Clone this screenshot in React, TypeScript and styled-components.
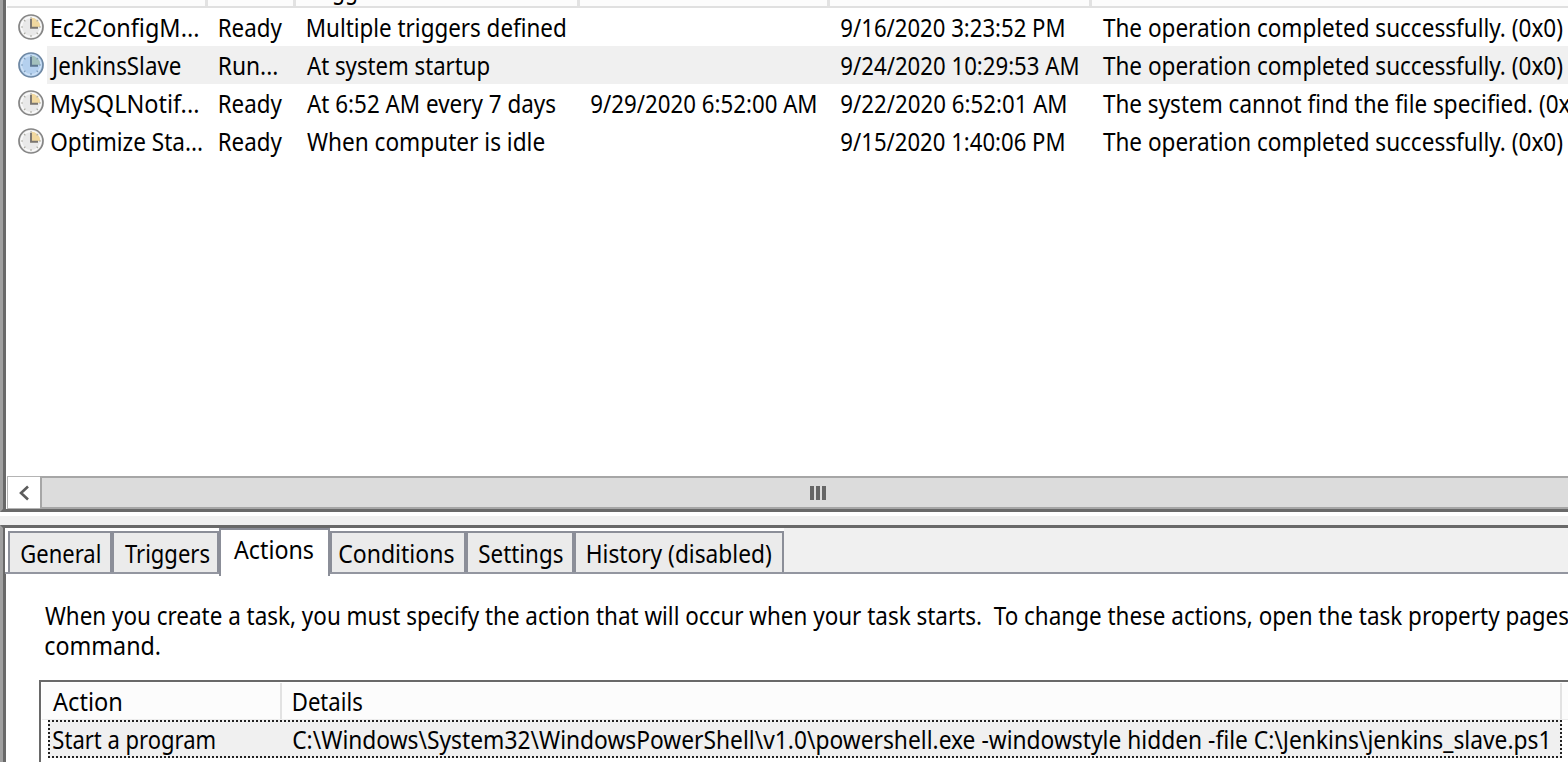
import React, { useLayoutEffect, useState } from "react";
import styled, { createGlobalStyle } from "styled-components";

const FONT = '"Noto Sans", "Open Sans", sans-serif';
const SIZE = 24.5;

const Global = createGlobalStyle`
  html, body { margin: 0; height: 762px; overflow: hidden; background: #fff; }
  * { box-sizing: border-box; }
`;

const Glyphs = styled.span`
  display: inline-block;
  white-space: pre;
  transform-origin: 0 50%;
`;

/* Text condensed horizontally so that its drawn extent is `ink` pixels wide.
   Measured at ten times the size, since glyph bounds are rounded to whole pixels. */
function Fit({ ink, children }: { ink: number; children: string }) {
  const [transform, setTransform] = useState("none");
  useLayoutEffect(() => {
    const ctx = document.createElement("canvas").getContext("2d");
    if (!ctx) return;
    ctx.font = `${SIZE * 10}px ${FONT}`;
    const m = ctx.measureText(children);
    const left = m.actualBoundingBoxLeft / 10;
    const right = m.actualBoundingBoxRight / 10;
    const scale = ink / (left + right);
    setTransform(`translate(${left * scale * 0.6}px, 1px) scaleX(${scale})`);
  }, [ink, children]);
  return <Glyphs style={{ transform }}>{children}</Glyphs>;
}

const Window = styled.div`
  width: 1568px;
  height: 762px;
  overflow: hidden;
  display: flex;
  flex-direction: column;
  background: #f0f0f0;
  color: #000;
  font: ${SIZE}px/38px ${FONT};
`;

const TaskPane = styled.section`
  height: 512px;
  flex: none;
  display: flex;
  flex-direction: column;
  background: #fff;
  border-bottom: 3px solid #696969;
  border-left: 3px solid #a0a0a0;
  box-shadow: inset 3px 0 #696969;
  padding-left: 4px;
`;

const HeaderRow = styled.div`
  display: grid;
  grid-template-columns: 201px 88px 284px 250px 262px 480px;
  height: 8px;
  flex: none;
  overflow: hidden;
  background: #fcfcfc;
  border-bottom: 2px solid #e0e0e0;
`;

const HeaderCell = styled.div`
  height: 6px;
  border-right: 3px solid #e2e2e2;
  padding-left: 11px;
  display: flex;
  align-items: flex-end;
  line-height: 34px;
  white-space: nowrap;
`;

const TaskRow = styled.div<{ $selected?: boolean }>`
  display: grid;
  grid-template-columns: 199px 88px 284px 250px 262px 478px;
  height: 38px;
  flex: none;
  background: ${(p) => (p.$selected ? "linear-gradient(90deg, #fff 40px, #f0f0f0 40px)" : "#fff")};
`;

const Cell = styled.div`
  display: flex;
  align-items: center;
  padding-left: 13px;
  white-space: nowrap;
  min-width: 0;
`;

const NameCell = styled(Cell)`
  padding-left: 11px;
  gap: 7px;
`;

const ClockSvg = styled.svg`
  flex: none;
`;

const ListSpace = styled.div`
  flex: 1;
`;

const ScrollBar = styled.div`
  display: flex;
  height: 33px;
  flex: none;
`;

const ScrollButton = styled.div`
  width: 33px;
  border: 1px solid #b4b4b4;
  border-right: 0;
  display: flex;
  align-items: center;
  justify-content: center;
`;

const ScrollThumb = styled.div`
  flex: 1;
  background: #dcdcdc;
  border: 2px solid #a6a6a6;
  border-right: 0;
  display: flex;
  align-items: center;
  padding-left: 768px;
  gap: 2px;
`;

const GripBar = styled.i`
  width: 4px;
  height: 14px;
  background: #666;
`;

const Splitter = styled.div`
  height: 13px;
  flex: none;
  border-top: 4px solid #fff;
  background: #f0f0f0;
`;

const DetailPane = styled.section`
  flex: 1;
  min-height: 0;
  display: flex;
  flex-direction: column;
  background: #fff;
  border-top: 3px solid #696969;
  border-left: 3px solid #a0a0a0;
  box-shadow: inset 3px 0 #696969;
`;

const TabStrip = styled.div`
  height: 46px;
  flex: none;
  display: flex;
  align-items: flex-end;
  padding-left: 3px;
  margin-left: 2px;
  background: linear-gradient(90deg, #fff 779px, #f0f0f0 779px);
  border-bottom: 2px solid #9396a0;
`;

const Tab = styled.div<{ $w: number; $pad: number; $active?: boolean }>`
  width: ${(p) => p.$w}px;
  height: ${(p) => (p.$active ? 48 : 41)}px;
  flex: none;
  margin-bottom: ${(p) => (p.$active ? -4 : 0)}px;
  padding-left: ${(p) => p.$pad}px;
  position: relative;
  background: ${(p) => (p.$active ? "#fff" : "#ebebeb")};
  border: 2px solid #8b8e98;
  border-bottom: 0;
  line-height: ${(p) => (p.$active ? 38 : 39)}px;
`;

const Page = styled.div`
  padding: 26px 0 0 42px;
`;

const Explanation = styled.p`
  margin: 0;
  height: 80px;
  line-height: 30px;
  white-space: nowrap;
`;

const ActionTable = styled.div`
  margin-left: -6px;
  height: 90px;
  border: solid #696969;
  border-width: 2px 0 0 2px;
  padding: 1px 0 0 1px;
`;

const ActionHeader = styled.div`
  display: flex;
  height: 37px;
  background: #fcfcfc;
  border-bottom: 1px solid #ececec;
  line-height: 36px;
`;

const ActionHeaderCell = styled.div<{ $w: number; $pad: number }>`
  width: ${(p) => p.$w}px;
  padding-left: ${(p) => p.$pad}px;
  border-right: 2px solid #e2e2e2;
  flex: none;
`;

const ActionRow = styled.div`
  display: flex;
  margin-left: 6px;
  width: 1514px;
  height: 38px;
  background: #f0f0f0;
  border: 2px dotted #222;
  line-height: 34px;
`;

const ActionCell = styled.div<{ $w: number; $pad: number }>`
  width: ${(p) => p.$w}px;
  padding-left: ${(p) => p.$pad}px;
  flex: none;
`;

function Clock({ running }: { running?: boolean }) {
  return (
    <ClockSvg width="26" height="26" viewBox="0 0 26 26" fill="none">
      <circle cx="13" cy="13" r="12" fill={running ? "#b4d0ee" : "#e9e9e9"} stroke={running ? "#6d87a3" : "#858585"} strokeWidth="1.7" />
      <circle cx="13" cy="13" r="9.8" stroke={running ? "#cfe2f6" : "#fafafa"} strokeWidth="1.5" />
      <path d="M13 13V3.6A9.4 9.4 0 0 1 22.4 13Z" fill={running ? "#a3c0bd" : "#f1d89f"} />
      <path d="M13 3v2M13 21v2M3 13h2M21 13h2M6 6l1.4 1.4M18.6 18.6 20 20M6 20l1.4-1.4M18.6 7.4 20 6" stroke={running ? "#7f9dbb" : "#b0b0a8"} strokeWidth="1.2" />
      <path d="M13 5v8.7h7" stroke={running ? "#5d7790" : "#7a756f"} strokeWidth="1.9" />
    </ClockSvg>
  );
}

type Text = [string, number] | null;
const OK: Text = ["The operation completed successfully. (0x0)", 459];
const TASKS: { selected?: boolean; name: [string, number]; cells: Text[] }[] = [
  { name: ["Ec2ConfigM...", 146], cells: [["Ready", 62], ["Multiple triggers defined", 257], null, ["9/16/2020 3:23:52 PM", 222], OK] },
  { selected: true, name: ["JenkinsSlave", 130], cells: [["Run...", 57], ["At system startup", 182], null, ["9/24/2020 10:29:53 AM", 236], OK] },
  { name: ["MySQLNotif...", 146], cells: [["Ready", 62], ["At 6:52 AM every 7 days", 248], ["9/29/2020 6:52:00 AM", 224], ["9/22/2020 6:52:01 AM", 224], ["The system cannot find the file specified. (0x", 467]] },
  { name: ["Optimize Sta...", 150], cells: [["Ready", 62], ["When computer is idle", 237], null, ["9/15/2020 1:40:06 PM", 222], OK] },
];

const TABS: { label: string; ink: number; w: number; pad: number; active?: boolean }[] = [
  { label: "General", ink: 78, w: 104, pad: 11 },
  { label: "Triggers", ink: 84, w: 107, pad: 11 },
  { label: "Actions", ink: 79, w: 111, pad: 13, active: true },
  { label: "Conditions", ink: 114, w: 136, pad: 7 },
  { label: "Settings", ink: 83, w: 108, pad: 11 },
  { label: "History (disabled)", ink: 183, w: 210, pad: 11 },
];

export default function App() {
  return (
    <Window>
      <Global />
      <TaskPane>
        <HeaderRow>
          <HeaderCell />
          <HeaderCell />
          <HeaderCell><Fit ink={81}>Triggers</Fit></HeaderCell>
          <HeaderCell />
          <HeaderCell />
          <HeaderCell />
        </HeaderRow>
        {TASKS.map((t) => (
          <TaskRow key={t.name[0]} $selected={t.selected}>
            <NameCell><Clock running={t.selected} /><Fit ink={t.name[1]}>{t.name[0]}</Fit></NameCell>
            {t.cells.map((c, i) => <Cell key={i}>{c && <Fit ink={c[1]}>{c[0]}</Fit>}</Cell>)}
          </TaskRow>
        ))}
        <ListSpace />
        <ScrollBar>
          <ScrollButton>
            <svg width="12" height="16" viewBox="0 0 12 16" fill="none"><path d="M10 1.5 3 8l7 6.5" stroke="#5c5c5c" strokeWidth="2.6" /></svg>
          </ScrollButton>
          <ScrollThumb><GripBar /><GripBar /><GripBar /></ScrollThumb>
        </ScrollBar>
      </TaskPane>
      <Splitter />
      <DetailPane>
        <TabStrip>
          {TABS.map((t) => <Tab key={t.label} $w={t.w} $pad={t.pad} $active={t.active}><Fit ink={t.ink}>{t.label}</Fit></Tab>)}
        </TabStrip>
        <Page>
          <Explanation>
            <Fit ink={1523}>{"When you create a task, you must specify the action that will occur when your task starts.  To change these actions, open the task property pages"}</Fit>
            <br />
            <Fit ink={114}>command.</Fit>
          </Explanation>
          <ActionTable>
            <ActionHeader>
              <ActionHeaderCell $w={240} $pad={11}><Fit ink={68}>Action</Fit></ActionHeaderCell>
              <ActionHeaderCell $w={1280} $pad={11}><Fit ink={68}>Details</Fit></ActionHeaderCell>
            </ActionHeader>
            <ActionRow>
              <ActionCell $w={240} $pad={3}><Fit ink={161}>Start a program</Fit></ActionCell>
              <ActionCell $w={1268} $pad={3}><Fit ink={1253}>{"C:\\Windows\\System32\\WindowsPowerShell\\v1.0\\powershell.exe -windowstyle hidden -file C:\\Jenkins\\jenkins_slave.ps1"}</Fit></ActionCell>
            </ActionRow>
          </ActionTable>
        </Page>
      </DetailPane>
    </Window>
  );
}
